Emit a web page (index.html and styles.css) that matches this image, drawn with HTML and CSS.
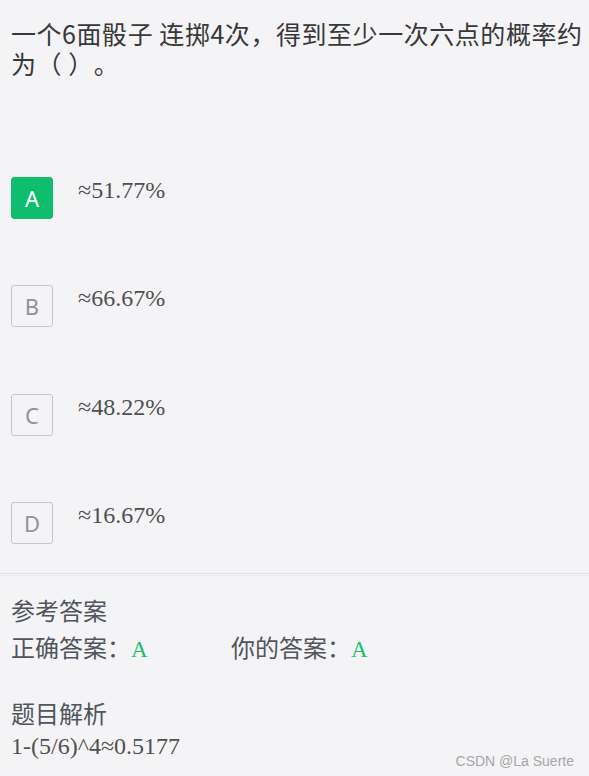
FILE: index.html
```html
<!DOCTYPE html>
<html lang="zh-CN">
<head>
<meta charset="utf-8">
<title>题目</title>
<link rel="stylesheet" href="styles.css">
</head>
<body>
<div class="page">
  <div class="question">一个6面骰子 连掷4次，得到至少一次六点的概率约为（ ）。</div>
  <div class="options">
    <div class="option">
      <span class="letter letter-active">A</span>
      <span class="option-text">≈51.77%</span>
    </div>
    <div class="option">
      <span class="letter">B</span>
      <span class="option-text">≈66.67%</span>
    </div>
    <div class="option">
      <span class="letter">C</span>
      <span class="option-text">≈48.22%</span>
    </div>
    <div class="option">
      <span class="letter">D</span>
      <span class="option-text">≈16.67%</span>
    </div>
  </div>
  <div class="divider"></div>
  <div class="answer">
    <div class="label">参考答案</div>
    <div class="answer-row">
      <span class="answer-item">正确答案：<span class="mark">A</span></span>
      <span class="answer-item">你的答案：<span class="mark">A</span></span>
    </div>
    <div class="label label-analysis">题目解析</div>
    <div class="analysis">1-(5/6)^4≈0.5177</div>
  </div>
  <div class="watermark">CSDN @La Suerte</div>
</div>
</body>
</html>
```

FILE: styles.css
```css
html, body {
  margin: 0;
  padding: 0;
  background: #f4f4f6;
}
.page {
  position: relative;
  width: 589px;
  height: 776px;
  overflow: hidden;
  font-family: "Noto Sans CJK SC", "Noto Sans", sans-serif;
  text-spacing-trim: space-all;
}
.question {
  padding: 18px 0 0 11px;
  font-size: 25px;
  line-height: 30px;
  color: #383838;
  letter-spacing: 0.55px;
}
.options {
  display: flex;
  flex-direction: column;
  gap: 66.3px;
  padding: 0 11px;
  margin-top: 99px;
}
.option {
  display: flex;
  align-items: flex-start;
  gap: 25px;
}
.letter {
  box-sizing: border-box;
  width: 42px;
  height: 42px;
  border: 1px solid #c3c6cc;
  border-radius: 3px;
  display: flex;
  align-items: center;
  justify-content: center;
  font-family: "Noto Sans", "Open Sans", sans-serif;
  font-size: 22px;
  color: #8e939b;
  flex: none;
}
.letter-active {
  background: #0fbd6f;
  border-color: #0fbd6f;
  color: #ffffff;
}
.option-text {
  font-family: "Liberation Serif", serif;
  font-size: 24px;
  color: #505050;
}
.divider {
  margin-top: 29px;
  height: 1px;
  border-top: 1px solid #e2e2e6;
  border-bottom: 1px solid #e8e8ee;
}
.answer {
  padding: 15px 11px 0 11px;
  color: #50545c;
}
.label {
  font-size: 24px;
  line-height: 37px;
}
.answer-row {
  display: flex;
  font-size: 24px;
  line-height: 37px;
}
.answer-item {
  width: 220px;
}
.mark {
  font-family: "Liberation Serif", serif;
  font-size: 23px;
  color: #19be6b;
}
.label-analysis {
  margin-top: 26px;
}
.analysis {
  font-family: "Liberation Serif", serif;
  font-size: 24px;
  line-height: 30px;
  color: #505050;
}
.watermark {
  position: absolute;
  right: 15px;
  bottom: 7px;
  font-family: "Liberation Sans", Arial, sans-serif;
  font-size: 14px;
  color: #a6a6a6;
}
```
